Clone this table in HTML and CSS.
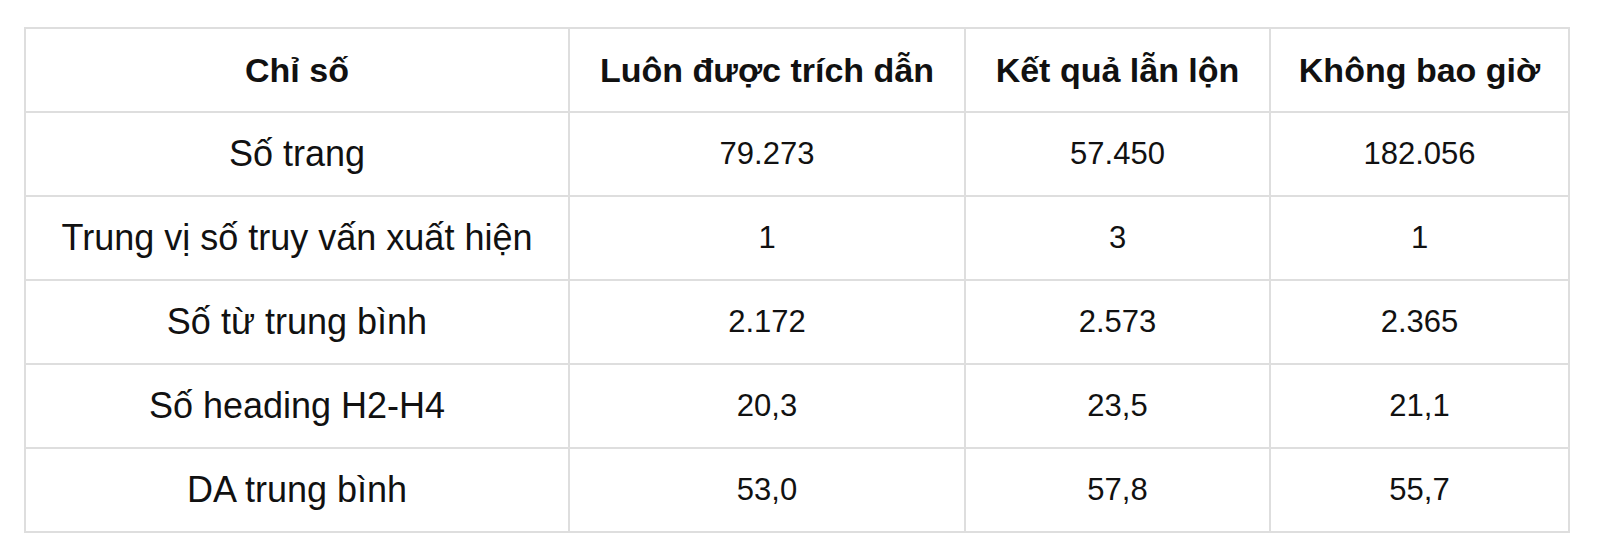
FILE: index.html
```html
<!DOCTYPE html>
<html lang="vi">
<head>
<meta charset="utf-8">
<link rel="stylesheet" href="styles.css">
</head>
<body>
<table class="data">
  <colgroup>
    <col class="c1"><col class="c2"><col class="c3"><col class="c4">
  </colgroup>
  <thead>
    <tr><th>Chỉ số</th><th>Luôn được trích dẫn</th><th>Kết quả lẫn lộn</th><th>Không bao giờ</th></tr>
  </thead>
  <tbody>
    <tr><td class="label">Số trang</td><td>79.273</td><td>57.450</td><td>182.056</td></tr>
    <tr><td class="label">Trung vị số truy vấn xuất hiện</td><td>1</td><td>3</td><td>1</td></tr>
    <tr><td class="label">Số từ trung bình</td><td>2.172</td><td>2.573</td><td>2.365</td></tr>
    <tr><td class="label">Số heading H2-H4</td><td>20,3</td><td>23,5</td><td>21,1</td></tr>
    <tr><td class="label">DA trung bình</td><td>53,0</td><td>57,8</td><td>55,7</td></tr>
  </tbody>
</table>
</body>
</html>
```

FILE: styles.css
```css
html, body {
  margin: 0;
  padding: 0;
  background: #ffffff;
}
body {
  padding: 27px 0 0 24px;
  font-family: "Liberation Sans", Arial, sans-serif;
  color: #111111;
}
.data {
  border-collapse: separate;
  border-spacing: 0;
  table-layout: fixed;
  width: 1546px;
  border-left: 2px solid #dedede;
  border-top: 2px solid #dedede;
}
.c1 { width: 544px; }
.c2 { width: 396px; }
.c3 { width: 305px; }
.c4 { width: 299px; }
.data th,
.data td {
  box-sizing: border-box;
  height: 84px;
  padding: 0 4px;
  border-right: 2px solid #dedede;
  border-bottom: 2px solid #dedede;
  text-align: center;
  vertical-align: middle;
  line-height: 1.2;
  white-space: nowrap;
}
.data th {
  font-weight: 700;
  font-size: 34px;
}
.data td {
  font-weight: 400;
  font-size: 31px;
}
.data td.label {
  font-size: 36px;
}
```
